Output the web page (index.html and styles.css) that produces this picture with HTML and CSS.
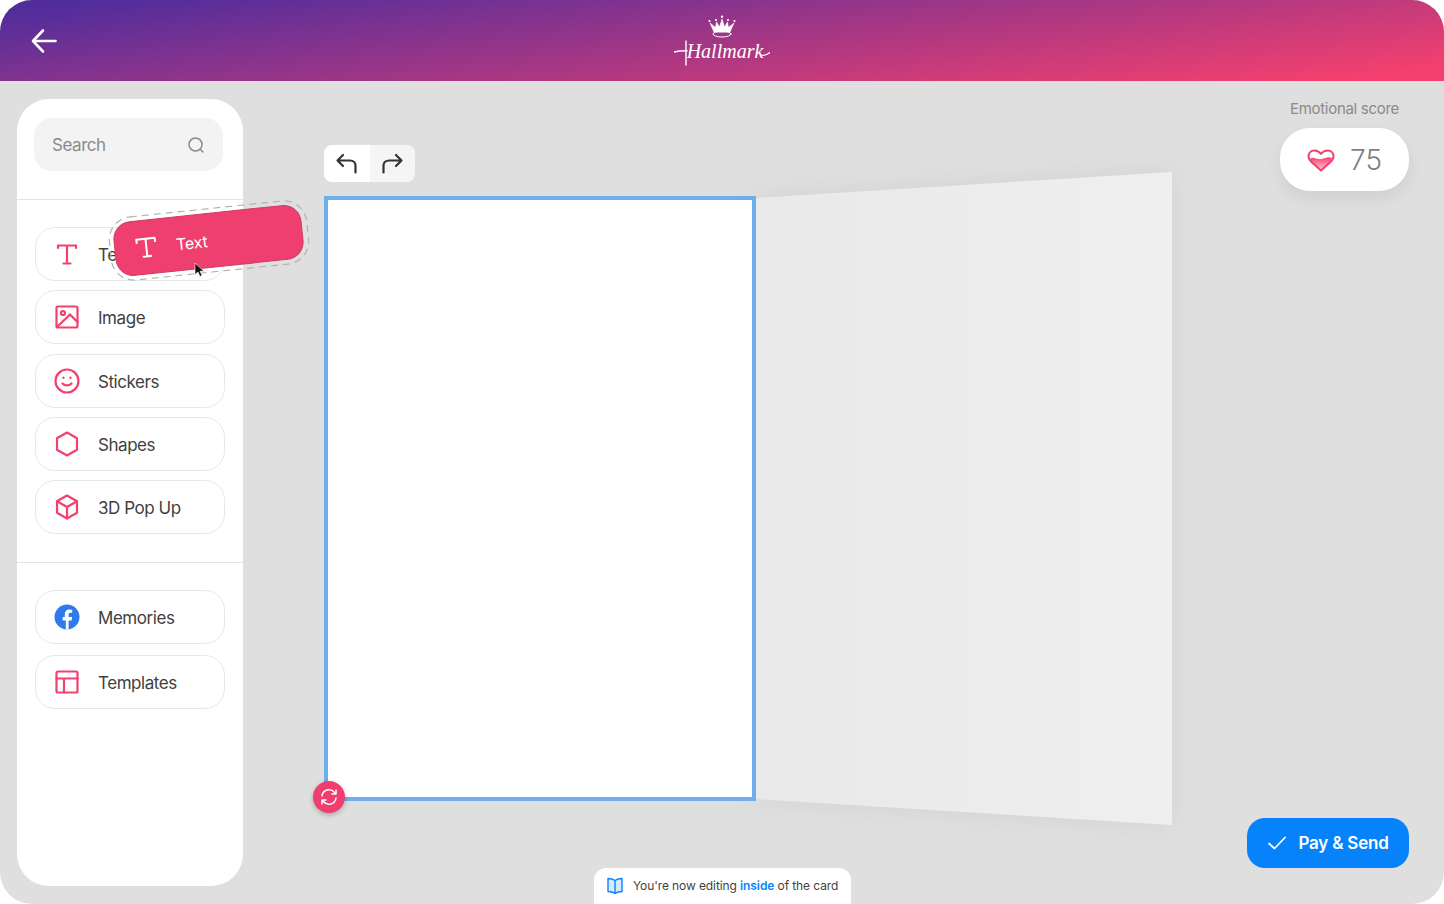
FILE: index.html
```html
<!DOCTYPE html>
<html lang="en">
<head>
  <meta charset="UTF-8">
  <title>Hallmark card editor</title>
  <link rel="stylesheet" href="styles.css">
</head>
<body>
  <div class="frame">
    <!-- Header -->
    <header class="topbar">
      <button class="back-btn" aria-label="Back">
        <svg width="28" height="28" viewBox="0 0 28 28" fill="none" stroke="#fff" stroke-width="2.6" stroke-linecap="round" stroke-linejoin="round"><path d="M13 3.500 3 14l10 10.500M3 14h22.500"/></svg>
      </button>
      <div class="logo">
        <svg class="crown" width="30" height="24" viewBox="0 0 30 24" fill="none" stroke="#fff" stroke-linecap="round" stroke-linejoin="round">
          <path d="M7 17 3 8l5.500 4.500 1-5.500 3 5L15 4l2.500 8 3-5 1 5.500L27 8l-4 9z" fill="#fff" stroke-width=".6"/>
          <ellipse cx="15" cy="19" rx="9" ry="3" stroke-width="1"/>
          <circle cx="15" cy="1.800" r="1.200" fill="#fff" stroke="none"/>
          <circle cx="9" cy="5" r="1.100" fill="#fff" stroke="none"/>
          <circle cx="21" cy="5" r="1.100" fill="#fff" stroke="none"/>
          <circle cx="2.500" cy="6" r="1.100" fill="#fff" stroke="none"/>
          <circle cx="27.500" cy="6" r="1.100" fill="#fff" stroke="none"/>
        </svg>
        <span class="logo-text">Hallmark</span>
        <svg class="logo-flourish" width="96" height="28" viewBox="0 0 96 28" fill="none" stroke="#fff" stroke-linecap="round">
          <path d="M0 14c4-1 8-1.200 13-1.200" stroke-width="1.600"/>
          <path d="M12 3v24" stroke-width="1.400"/>
          <path d="M87 17c3 1 6 0 9-2.500" stroke-width="1.300"/>
        </svg>
      </div>
    </header>

    <div class="workspace">
      <!-- Left panel -->
      <aside class="sidebar">
        <div class="search-wrap">
          <div class="search">
            <span>Search</span>
            <svg width="18" height="18" viewBox="0 0 18 18" fill="none" stroke="#8a8a8a" stroke-width="1.500" stroke-linecap="round"><circle cx="8.500" cy="8.500" r="6.500"/><path d="m13.500 13.500 2.500 2.500"/></svg>
          </div>
        </div>

        <div class="tools">
          <div class="tool">
            <svg class="tool-icon" viewBox="0 0 26 26" fill="none" stroke="#f4406e" stroke-width="2.200" stroke-linecap="round" stroke-linejoin="round"><path d="M4 7V4.500h18V7M13 4.500v18M9.500 22.500h7"/></svg>
            <span>Text</span>
          </div>
          <div class="tool">
            <svg class="tool-icon" viewBox="0 0 26 26" fill="none" stroke="#f4406e" stroke-width="2.200" stroke-linecap="round" stroke-linejoin="round"><rect x="2.500" y="2.500" width="21" height="21" rx="1.500"/><circle cx="9" cy="9" r="2"/><path d="m3 23 13-12.500 7.500 7.500"/></svg>
            <span>Image</span>
          </div>
          <div class="tool">
            <svg class="tool-icon" viewBox="0 0 26 26" fill="none" stroke="#f4406e" stroke-width="2.200" stroke-linecap="round" stroke-linejoin="round"><circle cx="13" cy="13" r="11.500"/><path d="M8.500 15.500c2.200 2.600 6.800 2.600 9 0"/><path d="M9.500 9.500v.5M16.500 9.500v.5"/></svg>
            <span>Stickers</span>
          </div>
          <div class="tool">
            <svg class="tool-icon" viewBox="0 0 26 26" fill="none" stroke="#f4406e" stroke-width="2.200" stroke-linecap="round" stroke-linejoin="round"><path d="M13 1.500 23 7.200v11.600l-10 5.700-10-5.700V7.200z"/></svg>
            <span>Shapes</span>
          </div>
          <div class="tool">
            <svg class="tool-icon" viewBox="0 0 26 26" fill="none" stroke="#f4406e" stroke-width="2.200" stroke-linecap="round" stroke-linejoin="round"><path d="M13 1.500 23 7.200v11.600l-10 5.700-10-5.700V7.200z"/><path d="m3 7.200 10 5.800 10-5.800M13 13v11.500"/></svg>
            <span>3D Pop Up</span>
          </div>
        </div>

        <div class="tools tools-extra">
          <div class="tool">
            <svg class="tool-icon" viewBox="0 0 26 26"><circle cx="13" cy="13" r="12.500" fill="#2f7bee"/><path d="M14.600 25.400v-9h3l.5-3.500h-3.500v-2.200c0-1 .5-1.900 2-1.900h1.600V5.800s-1.400-.3-2.800-.3c-2.800 0-4.600 1.700-4.600 4.800v2.600H8.700v3.500h3.100v9z" fill="#fff"/></svg>
            <span>Memories</span>
          </div>
          <div class="tool">
            <svg class="tool-icon" viewBox="0 0 26 26" fill="none" stroke="#f4406e" stroke-width="2.200" stroke-linecap="round" stroke-linejoin="round"><rect x="2.500" y="2.500" width="21" height="21" rx="1.500"/><path d="M2.500 9.500h21M10 9.500v14"/></svg>
            <span>Templates</span>
          </div>
        </div>

        <!-- Element being dragged out of the panel -->
        <div class="drag-chip">
          <svg class="drag-outline" width="200" height="65" viewBox="0 0 200 65" fill="none"><rect x=".750" y=".750" width="198.500" height="63.500" rx="23" stroke="#b4b4b4" stroke-width="1.300" stroke-dasharray="7 5"/></svg>
          <svg width="24" height="24" viewBox="0 0 26 26" fill="none" stroke="#fff" stroke-width="2.200" stroke-linecap="round" stroke-linejoin="round"><path d="M3 7V3.500h20V7M13 3.500v19M9 22.500h8"/></svg>
          <span>Text</span>
        </div>
        <svg class="cursor" width="12" height="16" viewBox="0 0 12 16"><path d="M1 1v11.500l3-2.500 2 4.500 2-1-2-4.300h4z" fill="#111" stroke="#fff" stroke-width=".6"/></svg>
      </aside>

      <!-- Card -->
      <main class="stage">
        <div class="history">
          <button class="history-btn" aria-label="Undo">
            <svg width="24" height="24" viewBox="0 0 24 24" fill="none" stroke="#333" stroke-width="2.200" stroke-linecap="round" stroke-linejoin="round"><path d="M8 3 2.500 8.500 8 14M3 8.500h12c3 0 5.500 2 5.500 5v7"/></svg>
          </button>
          <button class="history-btn history-btn-off" aria-label="Redo">
            <svg width="24" height="24" viewBox="0 0 24 24" fill="none" stroke="#333" stroke-width="2.200" stroke-linecap="round" stroke-linejoin="round"><path d="M16 3l5.500 5.500L16 14M21 8.500H9c-3 0-5.500 2-5.500 5v7"/></svg>
          </button>
        </div>
        <div class="spread">
          <div class="card">
            <button class="flip-btn" aria-label="Flip card">
              <svg width="18" height="18" viewBox="0 0 18 18" fill="none" stroke="#fff" stroke-width="1.500" stroke-linecap="round" stroke-linejoin="round"><path d="M2 8a7 7 0 0 1 12.500-3.500L16 6M16 2v4h-4M16 10a7 7 0 0 1-12.500 3.500L2 12M2 16v-4h4"/></svg>
            </button>
          </div>
          <svg class="page" width="416" height="653" viewBox="0 0 416 653">
            <defs>
              <linearGradient id="pageFill" x1="0" x2="1" y1="0" y2="0">
                <stop offset="0" stop-color="#e9e9e9"/>
                <stop offset="1" stop-color="#efefef"/>
              </linearGradient>
            </defs>
            <polygon points="0,26 416,0 416,653 0,627" fill="url(#pageFill)"/>
          </svg>
        </div>
      </main>

      <!-- Right column -->
      <aside class="side-right">
        <div class="score">
          <div class="score-label">Emotional score</div>
          <div class="score-pill">
            <svg width="28" height="24" viewBox="0 0 28 24">
              <defs>
                <linearGradient id="heartFill" x1="0" x2="0" y1="0" y2="1">
                  <stop offset="0" stop-color="#f4406e"/>
                  <stop offset="1" stop-color="#fbc9d7"/>
                </linearGradient>
              </defs>
              <path d="M3 11c4-3 6 1 11 0s7-3 11-1c-.500 2-2 4-4 6l-7 6-7-6c-2-1.500-3.500-3-4-5z" fill="url(#heartFill)"/>
              <path d="M14 22.500 5 14.500C2.500 12.200 1.500 10.500 1.500 8.200 1.500 5 4 2.500 7.200 2.500c2.700 0 5.200 1.300 6.800 3.400 1.600-2.100 4.100-3.400 6.800-3.400 3.200 0 5.700 2.500 5.700 5.700 0 2.300-1 4-3.500 6.300z" fill="none" stroke="#f4406e" stroke-width="2" stroke-linejoin="round"/>
            </svg>
            <span>75</span>
          </div>
        </div>
        <button class="pay-btn">
          <svg width="20" height="16" viewBox="0 0 20 16" fill="none" stroke="#fff" stroke-width="1.800" stroke-linecap="round" stroke-linejoin="round"><path d="m2 8.500 5.500 5L18 2.500"/></svg>
          Pay &amp; Send
        </button>
      </aside>
    </div>

    <!-- Bottom notice -->
    <div class="notice">
      <svg width="16" height="18" viewBox="0 0 16 18" fill="none" stroke="#0a84ff" stroke-width="1.400" stroke-linejoin="round"><path d="M8 3.500C6 2 3.500 1.500 1 1.500v13c2.500 0 5 .5 7 2 2-1.500 4.500-2 7-2v-13c-2.500 0-5 .5-7 2z" fill="#d7e9fb"/><path d="M8 3.500v13"/></svg>
      <span>You're now editing <b>inside</b> of the card</span>
    </div>
  </div>
</body>
</html>
```

FILE: styles.css
```css
/* General */
html, body {
  margin: 0;
  padding: 0;
  background: #fff;
}
body {
  font-family: Inter, "Noto Sans", sans-serif;
  color: #3f3f3f;
}
button {
  border: none;
  padding: 0;
  background: none;
  font-family: inherit;
}
svg {
  display: block;
}

.frame {
  position: relative;
  display: flex;
  flex-direction: column;
  width: 1444px;
  height: 904px;
  overflow: hidden;
  border-radius: 32px;
  background: #dfdfdf;
}

/* Header */
.topbar {
  position: relative;
  display: flex;
  flex: none;
  align-items: center;
  justify-content: center;
  height: 81px;
  background: linear-gradient(173deg, #512d9c 5%, #f4406e 95%);
}
.back-btn {
  position: absolute;
  left: 30px;
  top: 27px;
}
.logo {
  position: relative;
  display: flex;
  flex-direction: column;
  align-items: center;
  width: 96px;
  margin-bottom: 3px;
}
.logo-text {
  margin: -1px 0 0 6px;
  color: #fff;
  font-family: "Liberation Serif", serif;
  font-style: italic;
  font-size: 20px;
  line-height: 26px;
}
.logo-flourish {
  position: absolute;
  left: 0;
  bottom: -2px;
}

.workspace {
  display: flex;
  flex: 1;
  min-height: 0;
}

/* Left panel */
.sidebar {
  position: relative;
  flex: none;
  width: 226px;
  height: 787px;
  margin: 18px 0 0 17px;
  border-radius: 32px;
  background: #fff;
}
.search-wrap {
  padding: 19px 20px 28px 17px;
  border-bottom: 1px solid #e4e4e4;
}
.search {
  display: flex;
  align-items: center;
  justify-content: space-between;
  height: 53px;
  padding: 0 18px;
  border-radius: 18px;
  background: #f3f3f3;
  color: #8a8a8a;
  font-size: 17px;
  letter-spacing: -.45px;
}
.tools {
  display: flex;
  flex-direction: column;
  gap: 9.300px;
  padding: 27px 18px 27.800px;
  border-bottom: 1px solid #e4e4e4;
}
.tools-extra {
  gap: 11.500px;
  border-bottom: none;
}
.tool {
  display: flex;
  align-items: center;
  gap: 18.500px;
  box-sizing: border-box;
  height: 54px;
  padding-left: 17.500px;
  border: 1.500px solid #e8e8e8;
  border-radius: 20px;
  font-size: 17px;
  letter-spacing: -.45px;
}
.tool span {
  padding-top: 2px;
}
.tool-icon {
  flex: none;
  width: 26px;
  height: 26px;
}

/* Dragged element */
.drag-chip {
  position: absolute;
  left: 97px;
  top: 114px;
  display: flex;
  align-items: center;
  gap: 18px;
  box-sizing: border-box;
  width: 189px;
  height: 55px;
  padding-left: 19px;
  border: 1.500px solid #cf3a64;
  border-radius: 18px;
  background: #ee3f6e;
  color: #fff;
  font-size: 16px;
  letter-spacing: -.3px;
  transform: rotate(-6deg);
}
.drag-chip span {
  padding-top: 1px;
}
.drag-outline {
  position: absolute;
  left: -6.500px;
  top: -6.500px;
}
.cursor {
  position: absolute;
  left: 177px;
  top: 163px;
}

/* Card */
.stage {
  flex: 1;
  padding: 64px 0 0 81px;
}
.history {
  display: flex;
  width: 91px;
  height: 37px;
  overflow: hidden;
  border-radius: 8px;
}
.history-btn {
  display: flex;
  flex: 1;
  align-items: center;
  justify-content: center;
  background: #fff;
}
.history-btn-off {
  background: #f5f5f5;
}
.spread {
  position: relative;
  display: flex;
  align-items: center;
  margin-top: -10px;
}
.card {
  position: relative;
  z-index: 1;
  flex: none;
  box-sizing: border-box;
  width: 432px;
  height: 605px;
  border: 4px solid #6eaeea;
  background: #fff;
}
.flip-btn {
  position: absolute;
  left: -15px;
  bottom: -16px;
  display: flex;
  align-items: center;
  justify-content: center;
  width: 32px;
  height: 32px;
  border-radius: 50%;
  background: #f03e6e;
  box-shadow: 0 2px 5px rgba(0, 0, 0, .25);
}
.page {
  flex: none;
  filter: drop-shadow(0 0 14px rgba(0, 0, 0, .05));
}

/* Right column */
.side-right {
  display: flex;
  flex: none;
  flex-direction: column;
  align-items: flex-end;
  justify-content: space-between;
  padding: 19px 35px 36px 0;
}
.score {
  display: flex;
  flex-direction: column;
  align-items: center;
  gap: 10px;
}
.score-label {
  color: #8a8a8a;
  font-size: 15px;
  line-height: 18px;
  letter-spacing: -.3px;
}
.score-pill {
  display: flex;
  align-items: center;
  justify-content: center;
  gap: 15px;
  width: 129px;
  height: 63px;
  border-radius: 30px;
  background: #fff;
  box-shadow: 0 8px 16px rgba(0, 0, 0, .07);
  color: #7f7f7f;
  font-size: 28px;
  font-weight: 300;
}
.pay-btn {
  display: flex;
  align-items: center;
  justify-content: center;
  gap: 11px;
  width: 162px;
  height: 50px;
  border-radius: 18px;
  background: #0682fb;
  color: #fff;
  font-size: 17px;
  font-weight: 600;
  letter-spacing: -.2px;
}

/* Bottom notice */
.notice {
  position: absolute;
  left: 594px;
  bottom: 0;
  display: flex;
  align-items: center;
  gap: 10px;
  box-sizing: border-box;
  width: 257px;
  height: 36px;
  padding-left: 13px;
  border-radius: 12px 12px 0 0;
  background: #fff;
  font-size: 12px;
  letter-spacing: -.1px;
  white-space: nowrap;
}
.notice span {
  padding-bottom: 2px;
}
.notice b {
  color: #0a84ff;
  font-weight: 600;
}
```
